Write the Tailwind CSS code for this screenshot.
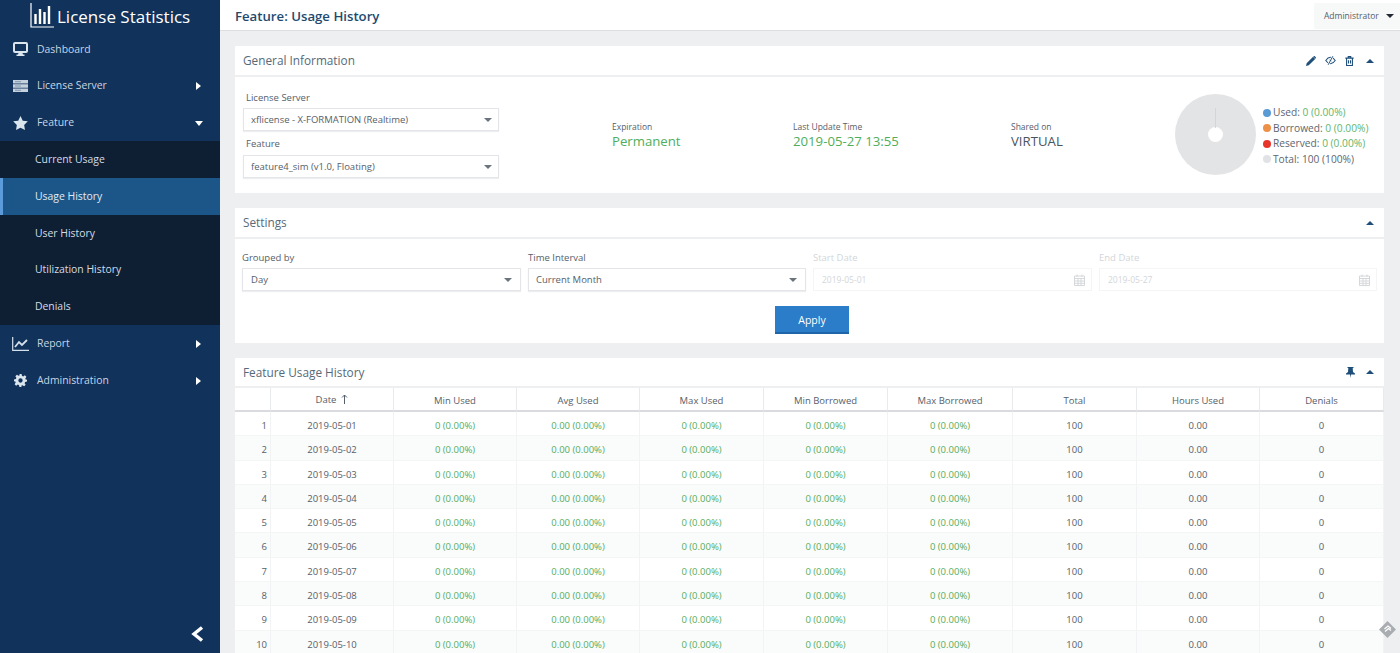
<!DOCTYPE html>
<html>
<head>
<meta charset="utf-8">
<script src="https://cdn.jsdelivr.net/npm/@tailwindcss/browser@4"></script>
</head>
<body class="font-['Open_Sans',sans-serif] text-[10px] text-[#56606a] bg-[#eeeff1]">
<div class="flex h-[653px] w-[1400px] overflow-hidden">
  <!-- sidebar -->
  <aside class="relative w-[220px] shrink-0 bg-[#11325a] text-[10.400px] text-[#c8d6e4]">
    <div class="flex h-[31.100px] items-center pl-[30px] text-white">
      <svg class="w-[25px] h-[26px] -mt-[2px]" viewBox="0 0 25 26" fill="none" stroke="#fff"><path d="M1 1V25H24" stroke-width="1.2"/><path d="M5.500 12V22M10 7V22M14.500 10V22M19 4V22" stroke-width="2.400"/></svg>
      <span class="ml-[2px] pt-[1px] text-[17px] leading-none">License Statistics</span>
    </div>
    <div class="flex h-[36.800px] items-center pl-[13px]">
      <svg class="w-[15px] h-[14px] mr-[9px]" viewBox="0 0 15 14" fill="none"><rect x="1" y="1" width="13" height="9" rx="1" stroke="#dbe5ee" stroke-width="2"/><path d="M5.500 11h4l.5 1.500h1.500V14h-8v-1.500H5z" fill="#dbe5ee"/></svg>
      <span>Dashboard</span>
    </div>
    <div class="flex h-[36.800px] items-center pl-[13px] pr-[19px]">
      <svg class="w-[15px] h-[12px] mr-[9px]" viewBox="0 0 15 12"><path d="M0 0h15v3.400H0zM0 4.300h15v3.400H0zM0 8.600h15V12H0z" fill="#c5d2de"/><path d="M2 1.700h6M2 6h6M2 10.300h6" stroke="#6f88a3" stroke-width=".8"/></svg>
      <span class="flex-1">License Server</span>
      <span class="w-0 h-0 border-y-[4px] border-y-transparent border-l-[5px] border-l-white"></span>
    </div>
    <div class="flex h-[36.800px] items-center pl-[13px] pr-[17px]">
      <svg class="w-[15px] h-[14px] mr-[9px]" viewBox="0 0 24 23" fill="#dbe5ee"><path d="M12 0l3.700 7.600 8.300 1.200-6 5.900 1.400 8.300L12 19.100 4.600 23 6 14.700 0 8.800l8.300-1.200z"/></svg>
      <span class="flex-1">Feature</span>
      <span class="w-0 h-0 border-x-[4.500px] border-x-transparent border-t-[5px] border-t-white"></span>
    </div>
    <div class="bg-[#0f1f33] text-[#d3dde7]">
      <div class="flex h-[36.800px] items-center pl-[35px]">Current Usage</div>
      <div class="flex h-[36.800px] items-center pl-[32px] bg-[#1c5688] border-l-[3px] border-l-[#5b9bdc] text-[#e2eaf2]">Usage History</div>
      <div class="flex h-[36.800px] items-center pl-[35px]">User History</div>
      <div class="flex h-[36.800px] items-center pl-[35px]">Utilization History</div>
      <div class="flex h-[36.800px] items-center pl-[35px]">Denials</div>
    </div>
    <div class="flex h-[36.800px] items-center pl-[12px] pr-[19px]">
      <svg class="w-[17px] h-[14px] mr-[8px]" viewBox="0 0 17 14" fill="none" stroke="#d5e0ea"><path d="M.7 0v13.300H17" stroke-width="1.200"/><path d="M3 10l4-5 3 3 5-5" stroke-width="1.800"/></svg>
      <span class="flex-1">Report</span>
      <span class="w-0 h-0 border-y-[4px] border-y-transparent border-l-[5px] border-l-white"></span>
    </div>
    <div class="flex h-[36.800px] items-center pl-[14px] pr-[19px]">
      <svg class="w-[13px] h-[13px] mr-[10px]" viewBox="0 0 24 24" fill="#dbe5ee"><path fill-rule="evenodd" d="M10 0h4l.7 3.400 2.300 1 3-1.900 2.800 2.800-1.900 3 1 2.300L24 10v4l-3.400.7-1 2.300 1.900 3-2.800 2.800-3-1.900-2.300 1L14 24h-4l-.7-3.400-2.300-1-3 1.900-2.800-2.800 1.900-3-1-2.300L0 14v-4l3.400-.7 1-2.300-1.900-3L5.300 1.200l3 1.900 2.300-1zM12 8a4 4 0 1 0 0 8 4 4 0 0 0 0-8z"/></svg>
      <span class="flex-1">Administration</span>
      <span class="w-0 h-0 border-y-[4px] border-y-transparent border-l-[5px] border-l-white"></span>
    </div>
    <svg class="absolute left-[191px] top-[626px] w-[13px] h-[16px]" viewBox="0 0 13 16" fill="none" stroke="#fff" stroke-width="3.400"><path d="M11 1.500L3 8l8 6.500"/></svg>
  </aside>

  <!-- main -->
  <main class="relative flex-1 min-w-0">
    <header class="flex h-[31px] items-start justify-between bg-white border-b border-b-[#dcdee0]">
      <h1 class="pl-[15px] pt-[7px] text-[13.200px] leading-[18px] font-semibold text-[#1e4a70]">Feature: Usage History</h1>
      <div class="flex items-center h-[26px] mt-[3px] w-[86px] pl-[10px] bg-[#f7f8f8] text-[8.500px] text-[#56606a]">
        <span>Administrator</span>
        <span class="ml-[7px] w-0 h-0 border-x-[4px] border-x-transparent border-t-[4.500px] border-t-[#222a33]"></span>
      </div>
    </header>

    <div class="pl-[15px] pr-[16px] pt-[15px] flex flex-col gap-[15px]">
      <!-- general -->
      <section class="bg-white h-[147px]">
        <div class="flex h-[31px] items-center justify-between pl-[8px] pr-[10px] border-b-2 border-b-[#eeeff1]">
          <h2 class="pt-[1px] text-[11.800px] text-[#566a78]">General Information</h2>
          <div class="flex items-center gap-[9px]">
            <svg class="w-[10px] h-[10px]" viewBox="0 0 12 12" fill="#1f4e79"><path d="M0 12l.8-3.300L8.500 1 11 3.500 3.300 11.200zM9.200.3a1 1 0 0 1 1.400 0l1.100 1.100a1 1 0 0 1 0 1.400l-.4.4L8.800.7z"/></svg>
            <svg class="w-[11px] h-[9px]" viewBox="0 0 14 11" fill="none"><path d="M1 5.500C3 2.500 5 1.500 7 1.500s4 1 6 4c-2 3-4 4-6 4s-4-1-6-4z" stroke="#1f4e79" stroke-width="1.300"/><circle cx="7" cy="5.500" r="1.500" fill="#1f4e79"/><path d="M10 0L4 11" stroke="#fff" stroke-width="2.800"/><path d="M10 0L4 11" stroke="#1f4e79" stroke-width="1.200"/></svg>
            <svg class="w-[9px] h-[10px]" viewBox="0 0 10 12" fill="none" stroke="#1f4e79" stroke-width="1.300"><path d="M0 2.500h10M3.500 2.500V.7h3v1.800M1.500 2.500v8.800h7V2.500M3.800 5v4M6.200 5v4"/></svg>
            <span class="ml-[3px] w-0 h-0 border-x-[4px] border-x-transparent border-b-[4.500px] border-b-[#1f4e79]"></span>
          </div>
        </div>
        <div class="flex pl-[8px]">
          <div class="w-[256px] pt-[14px]">
            <label class="block pl-[3px] text-[9.500px] leading-[14px]">License Server</label>
            <div class="mt-[3px] flex h-[23px] items-center justify-between pl-[7px] pr-[6px] border border-[#e3e5e8] shadow-[0_1px_1px_#eceef0] text-[9.500px]">
              <span class="pt-[2px]">xflicense - X-FORMATION (Realtime)</span>
              <span class="w-0 h-0 border-x-[4.500px] border-x-transparent border-t-[4.500px] border-t-[#6b747c]"></span>
            </div>
            <label class="block mt-[6px] pl-[3px] text-[9.500px] leading-[14px]">Feature</label>
            <div class="mt-[4px] flex h-[23px] items-center justify-between pl-[7px] pr-[6px] border border-[#e3e5e8] shadow-[0_1px_1px_#eceef0] text-[9.500px]">
              <span class="pt-[2px]">feature4_sim (v1.0, Floating)</span>
              <span class="w-0 h-0 border-x-[4.500px] border-x-transparent border-t-[4.500px] border-t-[#6b747c]"></span>
            </div>
          </div>
          <div class="ml-[113px] w-[181px] pt-[43px]">
            <div class="text-[8.500px] leading-[14px]">Expiration</div>
            <div class="text-[13.200px] leading-[15px] text-[#4fae5b]">Permanent</div>
          </div>
          <div class="w-[218px] pt-[43px]">
            <div class="text-[8.500px] leading-[14px]">Last Update Time</div>
            <div class="text-[13.200px] leading-[15px] text-[#4fae5b]">2019-05-27 13:55</div>
          </div>
          <div class="w-[164px] pt-[43px]">
            <div class="text-[8.500px] leading-[14px]">Shared on</div>
            <div class="text-[13.200px] leading-[15px] text-[#4a545e]">VIRTUAL</div>
          </div>
          <div class="relative mt-[17px] w-[81px] h-[81px] rounded-full bg-[#e3e4e6] flex items-center justify-center">
            <span class="absolute left-[40px] top-[14px] w-[1px] h-[20px] bg-[#d4d5d8]"></span>
            <span class="w-[15px] h-[15px] rounded-full bg-white"></span>
          </div>
          <ul class="ml-[7px] pt-[28px] text-[10.200px] leading-[15.500px] text-[#5d666f]">
            <li class="flex items-center"><span class="w-[8px] h-[8px] rounded-full bg-[#5b9bd5] mr-[2px]"></span>Used:&nbsp;<span class="text-[#62b56c]">0 (0.00%)</span></li>
            <li class="flex items-center"><span class="w-[8px] h-[8px] rounded-full bg-[#ee9148] mr-[2px]"></span>Borrowed:&nbsp;<span class="text-[#62b56c]">0 (0.00%)</span></li>
            <li class="flex items-center"><span class="w-[8px] h-[8px] rounded-full bg-[#e8352b] mr-[2px]"></span>Reserved:&nbsp;<span class="text-[#62b56c]">0 (0.00%)</span></li>
            <li class="flex items-center"><span class="w-[8px] h-[8px] rounded-full bg-[#e1e2e6] mr-[2px]"></span>Total: 100 (100%)</li>
          </ul>
        </div>
      </section>

      <!-- settings -->
      <section class="bg-white h-[135px]">
        <div class="flex h-[31px] items-center justify-between pl-[8px] pr-[10px] border-b-2 border-b-[#eeeff1]">
          <h2 class="pt-[1px] text-[11.800px] text-[#566a78]">Settings</h2>
          <span class="w-0 h-0 border-x-[4px] border-x-transparent border-b-[4.500px] border-b-[#1f4e79]"></span>
        </div>
        <div class="grid grid-cols-[279px_278px_279px_278px] gap-x-[7px] pl-[7px] pt-[11px] text-[9.500px]">
          <div>
            <label class="block leading-[15px]">Grouped by</label>
            <div class="mt-[3px] flex h-[23px] items-center justify-between pl-[8px] pr-[8px] border border-[#e3e5e8] shadow-[0_1px_1px_#eceef0]">
              <span class="pt-[2px]">Day</span>
              <span class="w-0 h-0 border-x-[4.500px] border-x-transparent border-t-[4.500px] border-t-[#6b747c]"></span>
            </div>
          </div>
          <div>
            <label class="block leading-[15px]">Time Interval</label>
            <div class="mt-[3px] flex h-[23px] items-center justify-between pl-[7px] pr-[8px] border border-[#e3e5e8] shadow-[0_1px_1px_#eceef0]">
              <span class="pt-[2px]">Current Month</span>
              <span class="w-0 h-0 border-x-[4.500px] border-x-transparent border-t-[4.500px] border-t-[#6b747c]"></span>
            </div>
          </div>
          <div class="text-[#d3d6d9]">
            <label class="block leading-[15px]">Start Date</label>
            <div class="mt-[3px] flex h-[23px] items-center justify-between pl-[8px] pr-[6px] border border-[#f4f5f6]">
              <span class="pt-[2px] text-[8.500px]">2019-05-01</span>
              <svg class="w-[11px] h-[12px]" viewBox="0 0 11 12" fill="none" stroke="#d5d8db"><path d="M.5 2h10v9.500H.5zM.5 4.500h10M3 .5v2.500M8 .5v2.500M4 4.500v7M7 4.500v7M.5 7h10M.5 9.300h10"/></svg>
            </div>
          </div>
          <div class="text-[#d3d6d9]">
            <label class="block leading-[15px]">End Date</label>
            <div class="mt-[3px] flex h-[23px] items-center justify-between pl-[8px] pr-[6px] border border-[#f4f5f6]">
              <span class="pt-[2px] text-[8.500px]">2019-05-27</span>
              <svg class="w-[11px] h-[12px]" viewBox="0 0 11 12" fill="none" stroke="#d5d8db"><path d="M.5 2h10v9.500H.5zM.5 4.500h10M3 .5v2.500M8 .5v2.500M4 4.500v7M7 4.500v7M.5 7h10M.5 9.300h10"/></svg>
            </div>
          </div>
        </div>
        <div class="flex justify-center pt-[15px] pl-[5px]">
          <button class="w-[74px] h-[28px] pt-[3px] bg-[#2b7cc9] border-b-2 border-b-[#1f66a9] text-white text-[10.500px]">Apply</button>
        </div>
      </section>

      <!-- table -->
      <section class="bg-white">
        <div class="flex h-[30px] items-center justify-between pl-[8px] pr-[10px] border-b-2 border-b-[#eeeff1]">
          <h2 class="pt-[2px] text-[11.800px] text-[#566a78]">Feature Usage History</h2>
          <div class="flex items-center gap-[11px]">
            <svg class="w-[9px] h-[11px]" viewBox="0 0 9 11" fill="#1f4e79"><path d="M1.500 0h6v1H6.700l.3 4 2 1.500V7.500H5L4.500 11 4 7.500H0V6.500L2 5l.3-4H1.500z"/></svg>
            <span class="w-0 h-0 border-x-[4px] border-x-transparent border-b-[4.500px] border-b-[#1f4e79]"></span>
          </div>
        </div>
        <div class="grid grid-cols-[36px_123px_123px_123px_124px_124px_125px_124px_123px_124px] text-[9.500px] text-center">
          <div class="contents [&>div]:h-[24px] [&>div]:leading-[25px] [&>div]:border-b-2 [&>div]:border-b-[#d9dbde] [&>div]:border-r [&>div]:border-r-[#e8eaec]">
            <div></div>
            <div class="flex items-center justify-center">Date<svg class="w-[7px] h-[10px] ml-[5px]" viewBox="0 0 7 10" fill="none" stroke="#56606a"><path d="M3.500 10V1M1 3.500L3.500 1 6 3.500"/></svg></div>
            <div>Min Used</div>
            <div>Avg Used</div>
            <div>Max Used</div>
            <div>Min Borrowed</div>
            <div>Max Borrowed</div>
            <div>Total</div>
            <div>Hours Used</div>
            <div>Denials</div>
          </div>
          <div class="contents [&>div]:h-[24.300px] [&>div]:leading-[28px] [&>div]:border-r [&>div]:border-r-[#f2f3f5] [&>div]:border-b [&>div]:border-b-[#f4f5f6]">
            <div class="text-right pr-[3px]">1</div><div>2019-05-01</div><div class="text-[#55ad60]">0 (0.00%)</div><div class="text-[#55ad60]">0.00 (0.00%)</div><div class="text-[#55ad60]">0 (0.00%)</div><div class="text-[#55ad60]">0 (0.00%)</div><div class="text-[#55ad60]">0 (0.00%)</div><div>100</div><div>0.00</div><div>0</div>
          </div>
          <div class="contents [&>div]:h-[24.300px] [&>div]:leading-[28px] [&>div]:bg-[#fafbfb] [&>div]:border-r [&>div]:border-r-[#f2f3f5] [&>div]:border-b [&>div]:border-b-[#f4f5f6]">
            <div class="text-right pr-[3px]">2</div><div>2019-05-02</div><div class="text-[#55ad60]">0 (0.00%)</div><div class="text-[#55ad60]">0.00 (0.00%)</div><div class="text-[#55ad60]">0 (0.00%)</div><div class="text-[#55ad60]">0 (0.00%)</div><div class="text-[#55ad60]">0 (0.00%)</div><div>100</div><div>0.00</div><div>0</div>
          </div>
          <div class="contents [&>div]:h-[24.300px] [&>div]:leading-[28px] [&>div]:border-r [&>div]:border-r-[#f2f3f5] [&>div]:border-b [&>div]:border-b-[#f4f5f6]">
            <div class="text-right pr-[3px]">3</div><div>2019-05-03</div><div class="text-[#55ad60]">0 (0.00%)</div><div class="text-[#55ad60]">0.00 (0.00%)</div><div class="text-[#55ad60]">0 (0.00%)</div><div class="text-[#55ad60]">0 (0.00%)</div><div class="text-[#55ad60]">0 (0.00%)</div><div>100</div><div>0.00</div><div>0</div>
          </div>
          <div class="contents [&>div]:h-[24.300px] [&>div]:leading-[28px] [&>div]:bg-[#fafbfb] [&>div]:border-r [&>div]:border-r-[#f2f3f5] [&>div]:border-b [&>div]:border-b-[#f4f5f6]">
            <div class="text-right pr-[3px]">4</div><div>2019-05-04</div><div class="text-[#55ad60]">0 (0.00%)</div><div class="text-[#55ad60]">0.00 (0.00%)</div><div class="text-[#55ad60]">0 (0.00%)</div><div class="text-[#55ad60]">0 (0.00%)</div><div class="text-[#55ad60]">0 (0.00%)</div><div>100</div><div>0.00</div><div>0</div>
          </div>
          <div class="contents [&>div]:h-[24.300px] [&>div]:leading-[28px] [&>div]:border-r [&>div]:border-r-[#f2f3f5] [&>div]:border-b [&>div]:border-b-[#f4f5f6]">
            <div class="text-right pr-[3px]">5</div><div>2019-05-05</div><div class="text-[#55ad60]">0 (0.00%)</div><div class="text-[#55ad60]">0.00 (0.00%)</div><div class="text-[#55ad60]">0 (0.00%)</div><div class="text-[#55ad60]">0 (0.00%)</div><div class="text-[#55ad60]">0 (0.00%)</div><div>100</div><div>0.00</div><div>0</div>
          </div>
          <div class="contents [&>div]:h-[24.300px] [&>div]:leading-[28px] [&>div]:bg-[#fafbfb] [&>div]:border-r [&>div]:border-r-[#f2f3f5] [&>div]:border-b [&>div]:border-b-[#f4f5f6]">
            <div class="text-right pr-[3px]">6</div><div>2019-05-06</div><div class="text-[#55ad60]">0 (0.00%)</div><div class="text-[#55ad60]">0.00 (0.00%)</div><div class="text-[#55ad60]">0 (0.00%)</div><div class="text-[#55ad60]">0 (0.00%)</div><div class="text-[#55ad60]">0 (0.00%)</div><div>100</div><div>0.00</div><div>0</div>
          </div>
          <div class="contents [&>div]:h-[24.300px] [&>div]:leading-[28px] [&>div]:border-r [&>div]:border-r-[#f2f3f5] [&>div]:border-b [&>div]:border-b-[#f4f5f6]">
            <div class="text-right pr-[3px]">7</div><div>2019-05-07</div><div class="text-[#55ad60]">0 (0.00%)</div><div class="text-[#55ad60]">0.00 (0.00%)</div><div class="text-[#55ad60]">0 (0.00%)</div><div class="text-[#55ad60]">0 (0.00%)</div><div class="text-[#55ad60]">0 (0.00%)</div><div>100</div><div>0.00</div><div>0</div>
          </div>
          <div class="contents [&>div]:h-[24.300px] [&>div]:leading-[28px] [&>div]:bg-[#fafbfb] [&>div]:border-r [&>div]:border-r-[#f2f3f5] [&>div]:border-b [&>div]:border-b-[#f4f5f6]">
            <div class="text-right pr-[3px]">8</div><div>2019-05-08</div><div class="text-[#55ad60]">0 (0.00%)</div><div class="text-[#55ad60]">0.00 (0.00%)</div><div class="text-[#55ad60]">0 (0.00%)</div><div class="text-[#55ad60]">0 (0.00%)</div><div class="text-[#55ad60]">0 (0.00%)</div><div>100</div><div>0.00</div><div>0</div>
          </div>
          <div class="contents [&>div]:h-[24.300px] [&>div]:leading-[28px] [&>div]:border-r [&>div]:border-r-[#f2f3f5] [&>div]:border-b [&>div]:border-b-[#f4f5f6]">
            <div class="text-right pr-[3px]">9</div><div>2019-05-09</div><div class="text-[#55ad60]">0 (0.00%)</div><div class="text-[#55ad60]">0.00 (0.00%)</div><div class="text-[#55ad60]">0 (0.00%)</div><div class="text-[#55ad60]">0 (0.00%)</div><div class="text-[#55ad60]">0 (0.00%)</div><div>100</div><div>0.00</div><div>0</div>
          </div>
          <div class="contents [&>div]:h-[24.300px] [&>div]:leading-[28px] [&>div]:bg-[#fafbfb] [&>div]:border-r [&>div]:border-r-[#f2f3f5] [&>div]:border-b [&>div]:border-b-[#f4f5f6]">
            <div class="text-right pr-[3px]">10</div><div>2019-05-10</div><div class="text-[#55ad60]">0 (0.00%)</div><div class="text-[#55ad60]">0.00 (0.00%)</div><div class="text-[#55ad60]">0 (0.00%)</div><div class="text-[#55ad60]">0 (0.00%)</div><div class="text-[#55ad60]">0 (0.00%)</div><div>100</div><div>0.00</div><div>0</div>
          </div>
        </div>
      </section>
    </div>
    <svg class="absolute left-[1159px] top-[621px] w-[17px] h-[17px]" viewBox="0 0 17 17"><path d="M8.500 0L17 8.500 8.500 17 0 8.500z" fill="#a9adb1"/><path d="M5.500 8l3.500-3 3 2.500M6 10.500l3.500-3 2.500 2" fill="none" stroke="#fff" stroke-width="1.200"/></svg>
  </main>
</div>
</body>
</html>
